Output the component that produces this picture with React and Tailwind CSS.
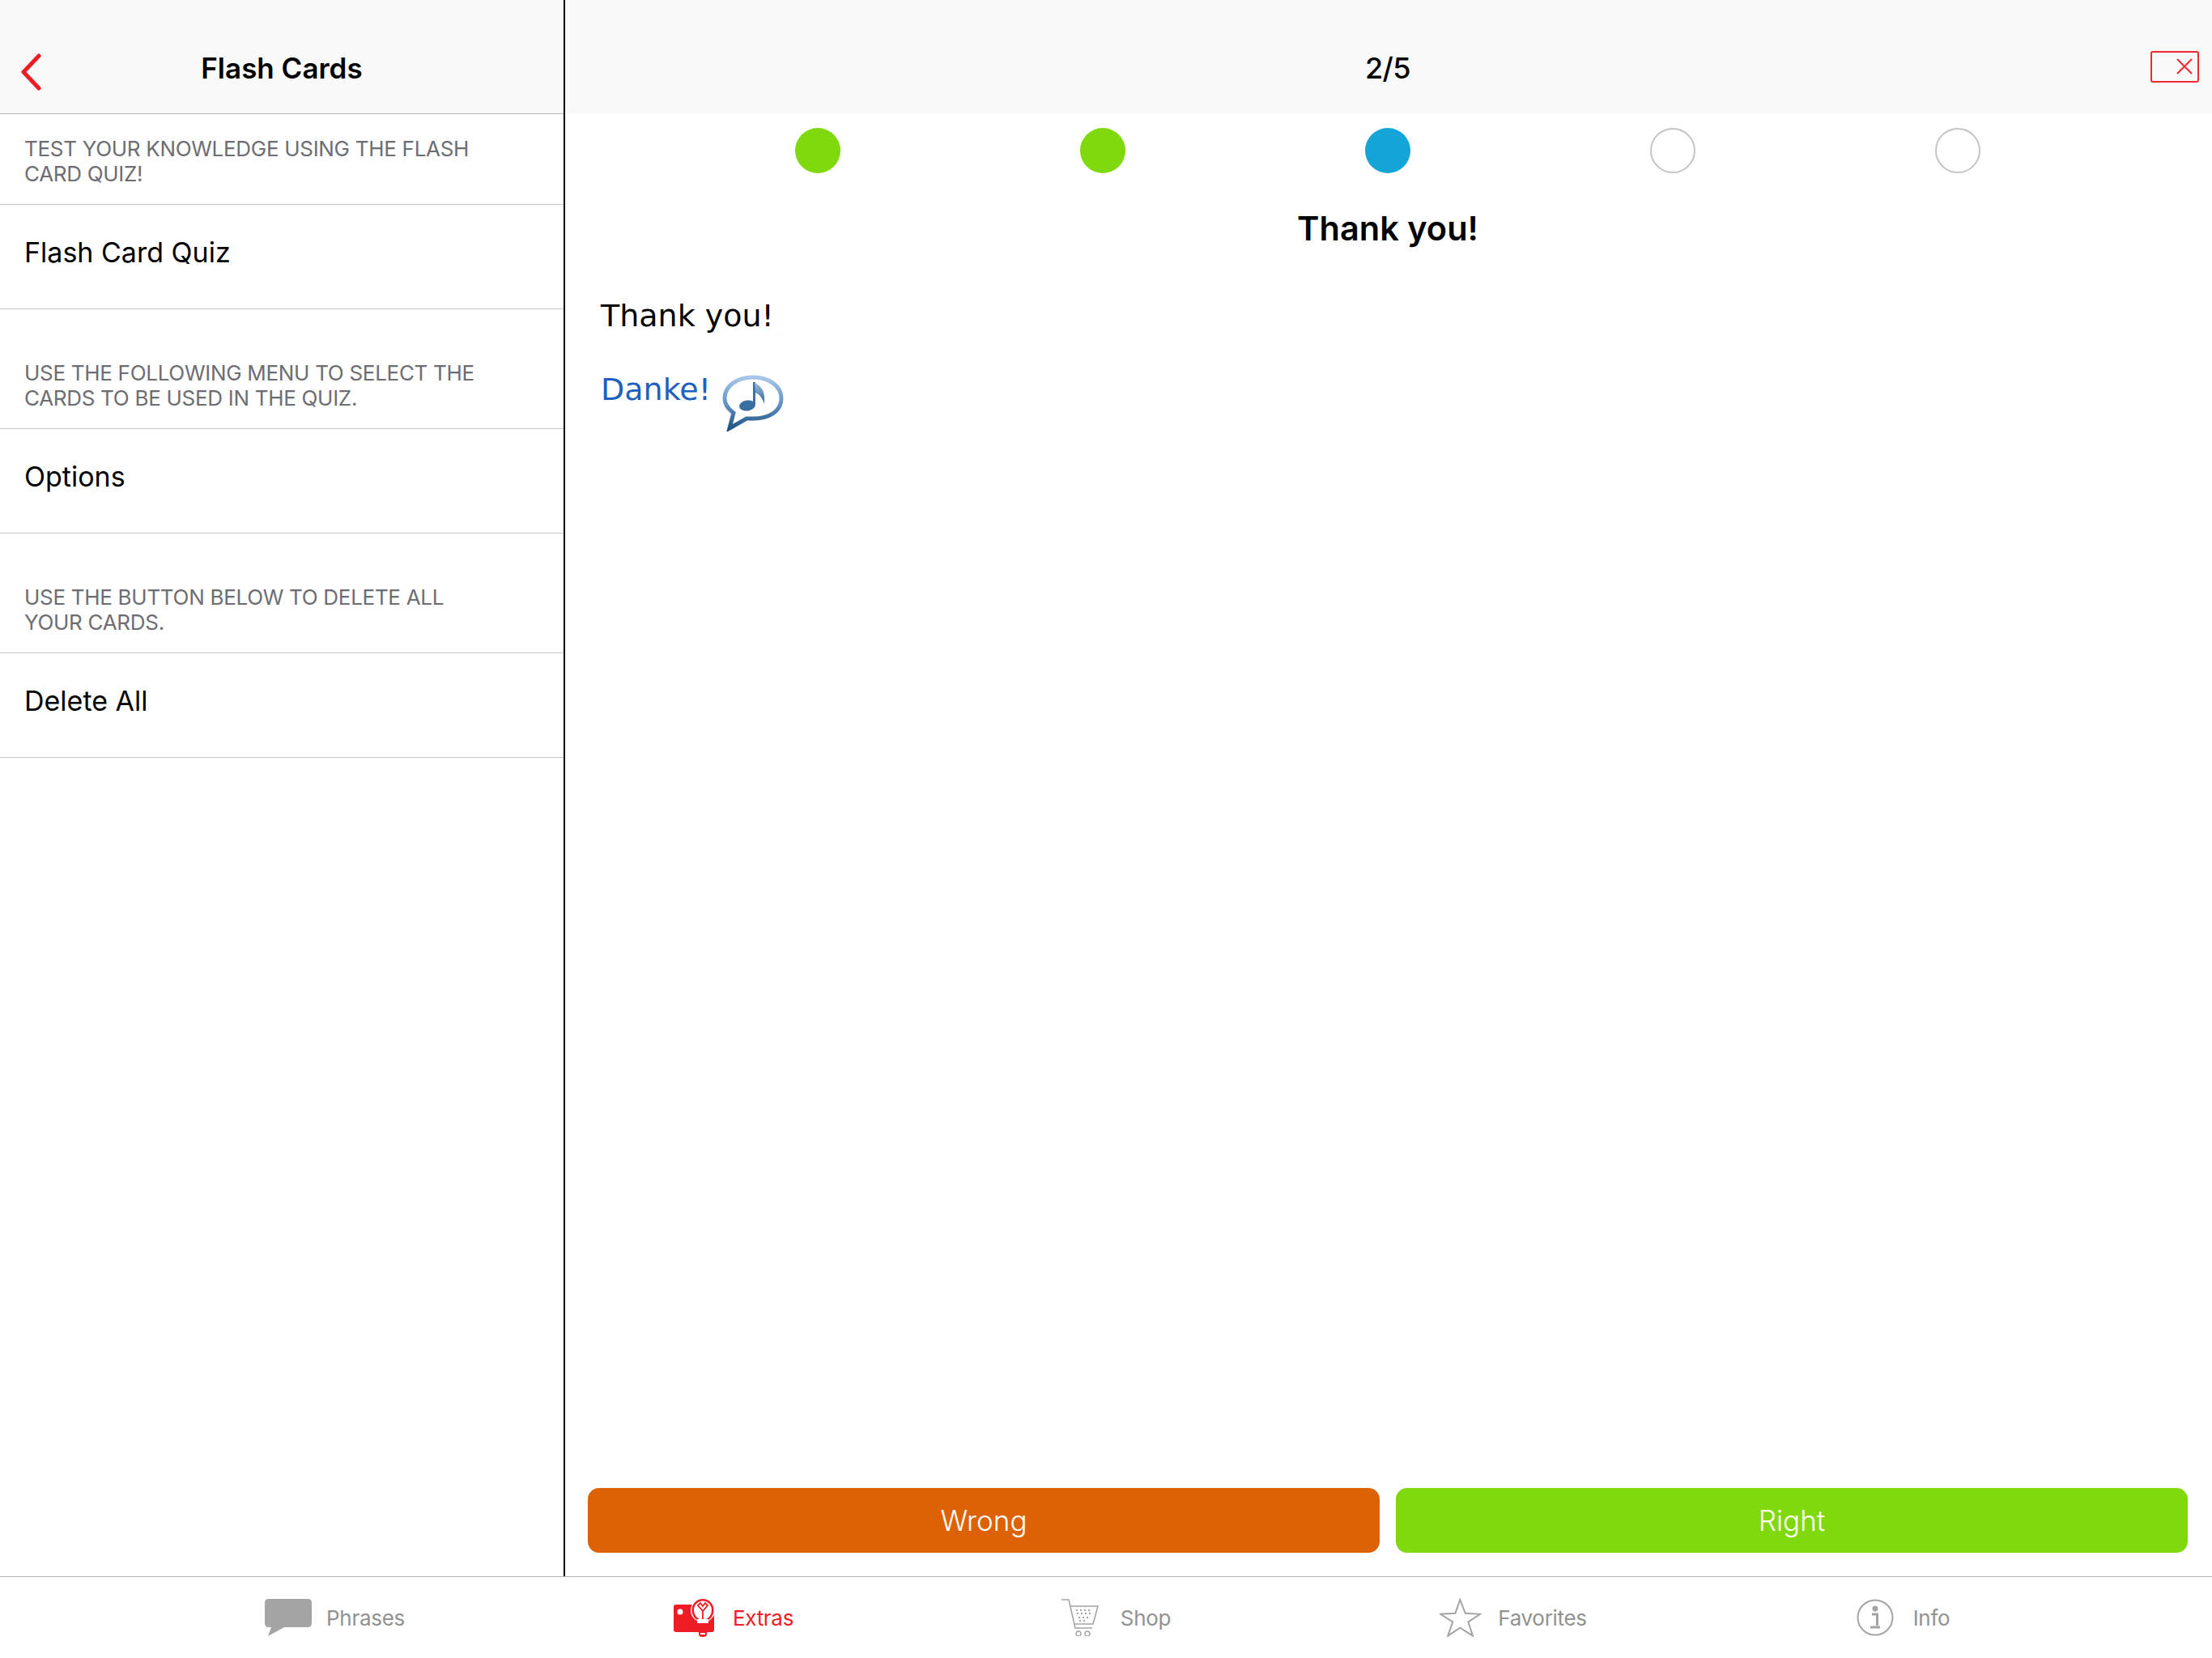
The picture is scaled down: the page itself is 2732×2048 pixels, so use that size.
const sans = "font-['Inter','Liberation_Sans',sans-serif]";

function BackIcon() {
  return (
    <svg width="30" height="46" viewBox="0 0 30 46" fill="none">
      <path d="M24 3 L5 23 L24 43" stroke="#ee1c25" strokeWidth="5" strokeLinecap="round" strokeLinejoin="round" />
    </svg>
  );
}

function CloseBox() {
  return (
    <div className="w-[60px] h-[39px] border-2 border-[#f0282f] rounded-[3px] flex items-center justify-end pr-[6px]">
      <svg width="20" height="20" viewBox="0 0 20 20">
        <path d="M1 1 L19 19 M19 1 L1 19" stroke="#f0282f" strokeWidth="2" />
      </svg>
    </div>
  );
}

function SpeakerBubble() {
  return (
    <svg width="76" height="70" viewBox="0 0 76 70" fill="none">
      <defs>
        <linearGradient id="bubbleGrad" x1="0" y1="0" x2="0" y2="1">
          <stop offset="0" stopColor="#a9c6ea" />
          <stop offset="0.55" stopColor="#5f8fc0" />
          <stop offset="1" stopColor="#1f5583" />
        </linearGradient>
        <linearGradient id="noteGrad" x1="0" y1="0" x2="0" y2="1">
          <stop offset="0" stopColor="#9fbfdf" />
          <stop offset="1" stopColor="#2f6596" />
        </linearGradient>
      </defs>
      <path
        d="M38 3 C58 3 73 14 73 29 C73 45 58 54 38 54 C36 54 33 54 30 54 L9 66 L14 47 C7 42 3 36 3 29 C3 14 18 3 38 3 Z"
        stroke="url(#bubbleGrad)"
        strokeWidth="5"
        strokeLinejoin="miter"
      />
      <ellipse cx="31" cy="38" rx="10" ry="6.5" fill="#386f9f" transform="rotate(-8 31 38)" />
      <path d="M38 9 L41 9 L41 37 L38 37 Z" fill="#3d73a3" />
      <path d="M40 9 C46 14 54 17 52 36 C50 29 46 24 41 22 Z" fill="url(#noteGrad)" />
    </svg>
  );
}

function PhrasesIcon() {
  return (
    <svg width="58" height="46" viewBox="0 0 58 46">
      <path d="M5 0 H53 Q58 0 58 5 V30 Q58 35 53 35 H24 L4 46 L8 35 H5 Q0 35 0 30 V5 Q0 0 5 0 Z" fill="#a4a4a4" />
    </svg>
  );
}

function ExtrasIcon() {
  return (
    <svg width="52" height="48" viewBox="0 0 52 48">
      <rect x="0" y="8" width="50" height="34" rx="3" fill="#ee1c25" />
      <circle cx="8" cy="17" r="3.5" fill="#fff" />
      <ellipse cx="36" cy="15" rx="15" ry="15" fill="#fff" />
      <ellipse cx="36" cy="15" rx="13.5" ry="14" fill="#ee1c25" />
      <ellipse cx="36" cy="15" rx="11" ry="11.5" fill="#fff" />
      <path d="M36 27 V16 M36 16 L30 9 L33 6 L36 10 L39 6 L42 9 Z" fill="none" stroke="#ee1c25" strokeWidth="1.8" />
      <path d="M29 26 H43 V31 H29 Z" fill="#fff" />
      <path d="M29 31 H43 V35 H29 Z M29 37 H43 V41 H29 Z" fill="#ee1c25" />
      <path d="M31 42 H41 V45 Q41 48 36 48 Q31 48 31 45 Z" fill="#ee1c25" />
      <path d="M33 43 H39 V45 H33 Z" fill="#fff" />
    </svg>
  );
}

function ShopIcon() {
  return (
    <svg width="46" height="46" viewBox="0 0 46 46" fill="none" stroke="#a4a4a4">
      <path d="M0 1 H9 L17 36 H38" strokeWidth="1.6" />
      <path d="M11 9 H45 L39 31 H16" strokeWidth="1.6" />
      <path d="M18 14 h18 M19 18 h17 M21 23 h13 M22 27 h9" strokeWidth="2" strokeDasharray="2 3" />
      <circle cx="21" cy="43" r="3" strokeWidth="1.4" />
      <circle cx="32" cy="43" r="3" strokeWidth="1.4" />
    </svg>
  );
}

function FavoritesIcon() {
  return (
    <svg width="52" height="48" viewBox="0 0 52 48" fill="none">
      <path
        d="M25.3 2 L31.8 18.8 L50 19.8 L35.4 29.5 L41 46.7 L25.3 36.7 L10.2 46.7 L16.2 29.5 L1 19.8 L19.4 18.8 Z"
        stroke="#a4a4a4"
        strokeWidth="2"
        strokeLinejoin="miter"
      />
    </svg>
  );
}

function InfoIcon() {
  return (
    <svg width="46" height="46" viewBox="0 0 46 46" fill="none">
      <circle cx="23" cy="23" r="21.5" stroke="#a4a4a4" strokeWidth="2" />
      <circle cx="23" cy="12" r="3.5" fill="#a4a4a4" />
      <path d="M19 19 H25.5 V33 M17 35 H29" stroke="#a4a4a4" strokeWidth="3" />
    </svg>
  );
}

function SectionNote({ lines, className }) {
  return (
    <div className={"pl-[30px] pb-[22px] text-[26px] leading-[31px] text-[#6d6d72] border-b border-[#c8c7cc] " + className}>
      {lines.map((l) => (
        <div key={l} className="whitespace-nowrap tracking-[-0.3px]">{l}</div>
      ))}
    </div>
  );
}

function MenuRow({ label }) {
  return (
    <div className="h-[129px] pl-[30px] pb-[12px] flex items-center text-[34px] text-black border-b border-[#c8c7cc]">
      {label}
    </div>
  );
}

function Sidebar() {
  return (
    <aside className="w-[698px] border-r-2 border-black flex flex-col">
      <div className="h-[141px] bg-[#f9f9f9] border-b border-[#b2b2b2] grid grid-cols-[1fr_auto_1fr] items-center pt-[28px]">
        <div className="pl-[24px] pt-[10px]"><BackIcon /></div>
        <div className="text-[35px] font-semibold text-black">Flash Cards</div>
        <div />
      </div>
      <SectionNote className="pt-[27px]" lines={["TEST YOUR KNOWLEDGE USING THE FLASH", "CARD QUIZ!"]} />
      <MenuRow label="Flash Card Quiz" />
      <SectionNote className="pt-[63px]" lines={["USE THE FOLLOWING MENU TO SELECT THE", "CARDS TO BE USED IN THE QUIZ."]} />
      <MenuRow label="Options" />
      <SectionNote className="pt-[63px]" lines={["USE THE BUTTON BELOW TO DELETE ALL", "YOUR CARDS."]} />
      <MenuRow label="Delete All" />
    </aside>
  );
}

function Dot({ className }) {
  return <div className={"w-[56px] h-[56px] rounded-full " + className} />;
}

function Quiz() {
  return (
    <main className="flex-1 flex flex-col">
      <div className="h-[140px] bg-[#f9f9f9] grid grid-cols-[1fr_auto_1fr] items-center pt-[28px]">
        <div />
        <div className="text-[36px] font-medium text-black tracking-[-0.5px] pr-[2px]">2/5</div>
        <div className="flex justify-end pr-[16px] -mt-[4px]"><CloseBox /></div>
      </div>
      <div className="flex justify-center gap-[296px] pt-[18px] pr-[2px]">
        <Dot className="bg-[#80d90c]" />
        <Dot className="bg-[#80d90c]" />
        <Dot className="bg-[#12a5d5]" />
        <Dot className="border-2 border-[#c4c4c4]" />
        <Dot className="border-2 border-[#c4c4c4]" />
      </div>
      <h1 className="mt-[40px] text-center text-[41.5px] leading-[56px] font-semibold text-black pr-[2px]">Thank you!</h1>
      <div className="font-['DejaVu_Sans',sans-serif] text-[38px] pl-[44px] pt-[56px]">
        <p className="leading-[48px] text-black">Thank you!</p>
        <div className="flex items-start gap-[14px] mt-[43px]">
          <span className="leading-[48px] text-[#1f5fbf]">Danke!</span>
          <div className="pt-[6px]"><SpeakerBubble /></div>
        </div>
      </div>
      <div className="mt-auto flex gap-[20px] pl-[28px] pr-[30px] pb-[29px]">
        <button className="flex-1 h-[80px] rounded-[14px] bg-[#dd6205] text-white text-[35px] font-light">Wrong</button>
        <button className="flex-1 h-[80px] rounded-[14px] bg-[#80d90c] text-white text-[35px] font-light">Right</button>
      </div>
    </main>
  );
}

function Tab({ icon, label, active, className }) {
  return (
    <div className={"flex items-center justify-center " + className}>
      {icon}
      <span className={"text-[26px] tracking-[-0.3px] " + (active ? "text-[#ee1c25]" : "text-[#929292]")}>{label}</span>
    </div>
  );
}

export default function App() {
  return (
    <div className={"w-[2732px] h-[2048px] flex flex-col bg-white overflow-hidden " + sans}>
      <div className="flex-1 flex min-h-0">
        <Sidebar />
        <Quiz />
      </div>
      <nav className="h-[101px] border-t border-[#b2b2b2] flex items-center pl-[168px]">
        <Tab className="w-[491px] gap-[18px]" icon={<PhrasesIcon />} label="Phrases" />
        <Tab className="w-[494px] gap-[21px]" icon={<ExtrasIcon />} label="Extras" active />
        <Tab className="w-[451px] gap-[27px]" icon={<ShopIcon />} label="Shop" />
        <Tab className="w-[530px] gap-[20px]" icon={<FavoritesIcon />} label="Favorites" />
        <Tab className="w-[433px] gap-[24px]" icon={<InfoIcon />} label="Info" />
      </nav>
    </div>
  );
}
